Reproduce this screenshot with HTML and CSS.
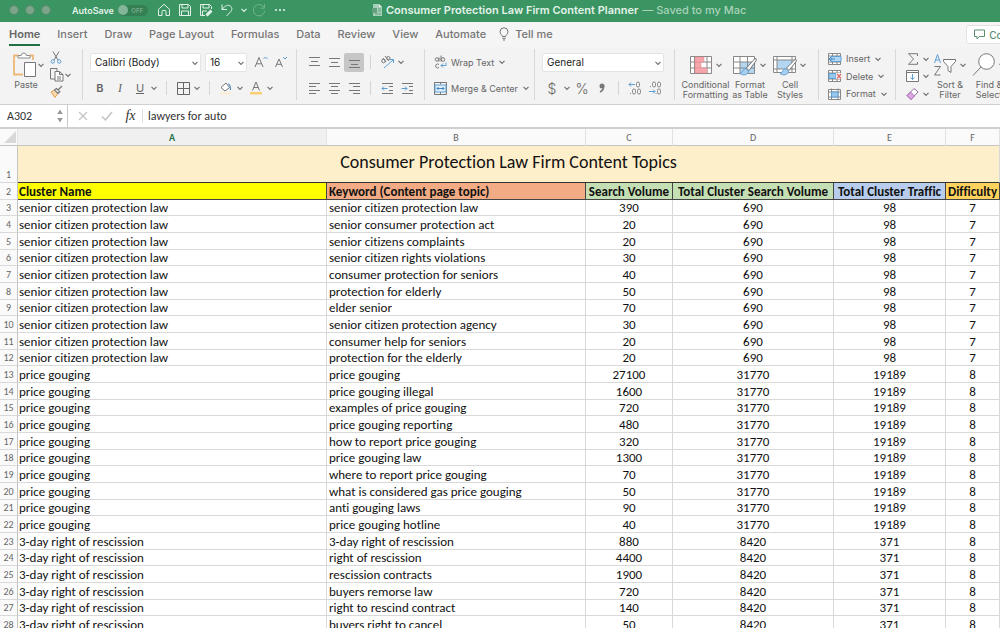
FILE: index.html
```html
<!DOCTYPE html>
<html lang="en">
<head>
<meta charset="utf-8">
<title>Consumer Protection Law Firm Content Planner</title>
<link rel="stylesheet" href="styles.css">
</head>
<body>
<svg class="defs" aria-hidden="true">
  <symbol id="chev" viewBox="0 0 8 8"><path d="M1.5 2.8 4 5.3 6.5 2.8" fill="none" stroke="currentColor" stroke-width="1.2"/></symbol>
</svg>
<div class="app">
  <header class="titlebar">
    <div class="quick">
      <div class="lights"><span></span><span></span><span></span></div>
      <label class="autosave">AutoSave <input type="checkbox" aria-label="AutoSave"><span class="switch">OFF</span></label>
      <button class="q" aria-label="Home"><svg width="14" height="14" viewBox="0 0 14 14"><path d="M1.5 6.3 7 1.3l5.500 5V12.500H9V8.500a1 1 0 0 0-1-1H6a1 1 0 0 0-1 1v4H1.500z"/></svg></button>
      <button class="q" aria-label="Save"><svg width="14" height="14" viewBox="0 0 14 14"><path d="M1.500 1.500h9l2 2v9h-11zM4 1.500V5h6V1.500M3.500 12.500V8h7v4.500"/></svg></button>
      <button class="q" aria-label="Save as"><svg width="14" height="14" viewBox="0 0 14 14"><path d="M6 12.500H1.500v-11h9l2 2V6M4 1.500V5h6V1.500M3.500 12.500V8H8"/><path d="m7 12 5-5M8 13l5-5" stroke-width="1.600"/></svg></button>
      <button class="q" aria-label="Undo"><svg width="14" height="14" viewBox="0 0 14 14"><path d="M2 1.500v5h5M2 6.500C5 2.500 8 1.500 10.300 3c2.200 1.500 2 4 .2 5.800L6.500 13"/></svg></button>
      <svg class="chev" width="8" height="8"><use href="#chev"/></svg>
      <button class="q dim" aria-label="Redo"><svg width="14" height="14" viewBox="0 0 14 14"><path d="M12.500 1.200v4h-4M12.300 5A5.700 5.700 0 1 0 12.700 8"/></svg></button>
      <button class="q" aria-label="More"><svg width="14" height="14" viewBox="0 0 14 14"><g fill="currentColor" stroke="none"><circle cx="3" cy="7" r="1.100"/><circle cx="7" cy="7" r="1.100"/><circle cx="11" cy="7" r="1.100"/></g></svg></button>
    </div>
    <div class="doc">
      <svg width="10" height="12" viewBox="0 0 10 12"><path d="M1 0h6l3 3v9H1z" fill="#a8cfb8"/><path d="M7 0v3h3" fill="#d9ebe0"/><path d="M0 4h5v5H0z" fill="#61a07c"/><path d="M6 5h3M6 7h3M3 10h6" stroke="#61a07c"/></svg>
      <h1>Consumer Protection Law Firm Content Planner</h1><span>— Saved to my Mac</span>
    </div>
  </header>

  <nav class="tabs">
    <button class="active">Home</button><button>Insert</button><button>Draw</button><button>Page Layout</button><button>Formulas</button><button>Data</button><button>Review</button><button>View</button><button>Automate</button>
    <button class="tell"><svg width="10" height="14" viewBox="0 0 10 14"><path d="M3.300 9.500C3.300 7.800 1 7.300 1 4.800a4 4 0 0 1 8 0c0 2.500-2.300 3-2.300 4.700zM3.300 11.300h3.400M4 13h2" fill="none" stroke="currentColor"/></svg>Tell me</button>
    <button class="comments"><svg width="11" height="11" viewBox="0 0 11 11"><path d="M.5 1h10v6.500H5.500L3 10V7.500H.5z" fill="none" stroke="currentColor"/></svg>Comments</button>
  </nav>

  <div class="ribbon">
    <section class="group clip">
      <button class="big paste"><span class="pic"><svg width="24" height="26" viewBox="0 0 24 26"><path d="M5 3.500H1v19h9M17 3.500h3V8" fill="none" stroke="#edb877" stroke-width="1.800"/><path d="M5 6V3.500h3.300a2.500 2.500 0 0 1 5 0H17V6z" fill="#fff" stroke="#8d8d8d"/><path d="M11.500 10.500h11v14h-11z" fill="#fff" stroke="#777"/></svg><svg class="chev" width="8" height="8"><use href="#chev"/></svg></span><span>Paste</span></button>
      <div class="stack">
        <button aria-label="Cut"><svg width="12" height="13" viewBox="0 0 12 13"><path d="m3 .5 5 8.500M9 .5 4 9" fill="none" stroke="#777"/><circle cx="2.800" cy="10.500" r="1.700" fill="none" stroke="#5e9fd4"/><circle cx="9.200" cy="10.500" r="1.700" fill="none" stroke="#5e9fd4"/></svg></button>
        <button aria-label="Copy"><svg width="14" height="14" viewBox="0 0 14 14"><path d="M5 11H.5V.5H7V3" fill="none" stroke="#777"/><path d="M5 3.500h4.500l3.500 3V13H5zM9.500 3.500v3H13M7 9h4M7 11h4" fill="#fff" stroke="#777"/></svg><svg class="chev" width="8" height="8"><use href="#chev"/></svg></button>
        <button aria-label="Format painter"><svg width="13" height="13" viewBox="0 0 13 13"><path d="m1 7 4-2 3 3-3 4.500z" fill="#f8d9b0" stroke="#e59b4a"/><path d="m4.500 5 2-1.500 3.300 3.200L8 8.500zM8 5l4-4" fill="#fff" stroke="#777" stroke-width="1.200"/></svg></button>
      </div>
    </section>

    <section class="group font">
      <div class="line">
        <span class="pick w-font"><select aria-label="Font"><option>Calibri (Body)</option></select><svg class="chev" width="8" height="8"><use href="#chev"/></svg></span>
        <span class="pick w-size"><select aria-label="Font size"><option>16</option></select><svg class="chev" width="8" height="8"><use href="#chev"/></svg></span>
        <button class="t" aria-label="Increase font size"><svg width="14" height="14" viewBox="0 0 14 14"><path d="M1 12 5 2.500 9 12M2.500 8.800h5" fill="none" stroke="#777"/><path d="m9.500 4 2-2 2 2" fill="none" stroke="#5e9fd4"/></svg></button>
        <button class="t" aria-label="Decrease font size"><svg width="14" height="14" viewBox="0 0 14 14"><path d="M1.500 12 5 4l3.500 8M2.800 9.300h4.500" fill="none" stroke="#777"/><path d="m9 2 2 2 2-2" fill="none" stroke="#5e9fd4"/></svg></button>
      </div>
      <div class="line">
        <button class="t b">B</button><button class="t i">I</button><button class="t u">U</button><svg class="chev" width="8" height="8"><use href="#chev"/></svg><i class="rule"></i>
        <button class="t" aria-label="Borders"><svg width="13" height="13" viewBox="0 0 13 13"><path d="M.5.5h12v12H.5zM6.500.5v12M.5 6.500h12" fill="none" stroke="#666"/></svg></button><svg class="chev" width="8" height="8"><use href="#chev"/></svg><i class="rule"></i>
        <button class="t" aria-label="Fill colour"><svg width="14" height="14" viewBox="0 0 14 14"><path d="m2 6.500 5-4.500 3.500 4.500L6 10z" fill="#fff" stroke="#777"/><path d="M9 3c2.500 0 2.500 3 2.500 6" fill="none" stroke="#4a8cc7" stroke-width="1.200"/><path d="M1 11.500h11v2H1z" fill="#fdebd0"/></svg></button><svg class="chev" width="8" height="8"><use href="#chev"/></svg>
        <button class="t" aria-label="Font colour"><svg width="14" height="14" viewBox="0 0 14 14"><path d="m3.500 9.500 3.500-8.500 3.500 8.500M4.800 6.500h4.400" fill="none" stroke="#777"/><path d="M1 11h12v2.500H1z" fill="#f8ce73"/></svg></button><svg class="chev" width="8" height="8"><use href="#chev"/></svg>
      </div>
    </section>

    <section class="group align">
      <div class="line">
        <button class="s" aria-label="Top align"><svg width="13" height="13" viewBox="0 0 13 13"><path d="M1 1.500h11M3 5.500h7M1 9.500h11" stroke="#777"/></svg></button>
        <button class="s" aria-label="Middle align"><svg width="13" height="13" viewBox="0 0 13 13"><path d="M1 2.500h11M3 6.500h7M1 10.500h11" stroke="#777"/></svg></button>
        <button class="s on" aria-label="Bottom align"><svg width="13" height="13" viewBox="0 0 13 13"><path d="M1 4.500h11M3 8.500h7M1 11.500h11" stroke="#777"/></svg></button><i class="rule"></i>
        <button class="s" aria-label="Orientation"><svg width="15" height="14" viewBox="0 0 15 14"><g fill="none" stroke="#777"><circle cx="3.500" cy="6" r="1.800"/><path d="m3 3 3 4M5 1l4 5"/><circle cx="8.300" cy="3.200" r="1.700"/></g><path d="m4 13 9-8M9.500 4.500H13.500V8" fill="none" stroke="#5e9fd4"/></svg></button><svg class="chev" width="8" height="8"><use href="#chev"/></svg>
      </div>
      <div class="line">
        <button class="s" aria-label="Align left"><svg width="13" height="13" viewBox="0 0 13 13"><path d="M1 1.500h11M1 4.500h7M1 8.500h11M1 11.500h7" stroke="#777"/></svg></button>
        <button class="s" aria-label="Centre"><svg width="13" height="13" viewBox="0 0 13 13"><path d="M1 1.500h11M3 4.500h7M1 8.500h11M3 11.500h7" stroke="#777"/></svg></button>
        <button class="s" aria-label="Align right"><svg width="13" height="13" viewBox="0 0 13 13"><path d="M1 1.500h11M5 4.500h7M1 8.500h11M5 11.500h7" stroke="#777"/></svg></button><i class="rule"></i>
        <button class="s" aria-label="Decrease indent"><svg width="13" height="13" viewBox="0 0 13 13"><path d="M1 1.500h11M8 4.500h4M8 8.500h4M1 11.500h11" stroke="#777"/><path d="M1 6.500h5.500M3 4.500l-2 2 2 2" fill="none" stroke="#5e9fd4"/></svg></button>
        <button class="s" aria-label="Increase indent"><svg width="13" height="13" viewBox="0 0 13 13"><path d="M1 1.500h11M8 4.500h4M8 8.500h4M1 11.500h11" stroke="#777"/><path d="M.5 6.500H6M4 4.500l2 2-2 2" fill="none" stroke="#5e9fd4"/></svg></button>
      </div>
    </section>

    <section class="group wrap">
      <div class="line"><button class="label"><svg width="13" height="14" viewBox="0 0 13 14"><g fill="none" stroke="#777"><circle cx="3" cy="4.500" r="1.700"/><path d="M5 2.500v4M7 .5v6"/><circle cx="9" cy="4.500" r="1.800"/><path d="M5 9.500a2 2 0 1 0 0 3"/></g><path d="M12 7.500v3H7M9 8.500l-2 2 2 2" fill="none" stroke="#5e9fd4"/></svg>Wrap Text<svg class="chev" width="8" height="8"><use href="#chev"/></svg></button></div>
      <div class="line"><button class="label"><svg width="13" height="13" viewBox="0 0 13 13"><path d="M.5.5h12v12H.5zM6.500.5v2M6.500 10v2.500" fill="none" stroke="#777"/><path d="M1 3h11v7H1z" fill="#e1f0fb" stroke="#5e9fd4"/><path d="M3 6.500h7M4.500 5 3 6.500 4.500 8M8.500 5 10 6.500 8.500 8" fill="none" stroke="#3f86c2"/></svg>Merge &amp; Center<svg class="chev" width="8" height="8"><use href="#chev"/></svg></button></div>
    </section>

    <section class="group number">
      <div class="line"><span class="pick w-num"><select aria-label="Number format"><option>General</option></select><svg class="chev" width="8" height="8"><use href="#chev"/></svg></span></div>
      <div class="line">
        <button class="s sym">$</button><svg class="chev" width="8" height="8"><use href="#chev"/></svg><button class="s sym">%</button><button class="s comma" aria-label="Comma style"><svg width="8" height="12" viewBox="0 0 8 12"><circle cx="4" cy="4" r="2.500" fill="#777"/><path d="M5.500 4q.5 4-3.500 6" fill="none" stroke="#777" stroke-width="1.500"/></svg></button><i class="rule"></i>
        <button class="s dec" aria-label="Increase decimal"><svg width="14" height="14" viewBox="0 0 14 14"><g fill="none" stroke="#888"><rect x="8.500" y="1" width="3" height="5" rx="1.500"/><rect x="4.500" y="8" width="3" height="5" rx="1.500"/><rect x="9.500" y="8" width="3" height="5" rx="1.500"/><path d="M2 12.500h1"/></g><path d="M7 3.500H1M3 1.500l-2 2 2 2" fill="none" stroke="#5e9fd4"/></svg></button>
        <button class="s dec" aria-label="Decrease decimal"><svg width="14" height="14" viewBox="0 0 14 14"><g fill="none" stroke="#888"><rect x="4.500" y="1" width="3" height="5" rx="1.500"/><rect x="9.500" y="1" width="3" height="5" rx="1.500"/><rect x="9.500" y="8" width="3" height="5" rx="1.500"/><path d="M2 5.500h1M7.500 12.500h1"/></g><path d="M1 10.500h6M5 8.500l2 2-2 2" fill="none" stroke="#5e9fd4"/></svg></button>
      </div>
    </section>

    <section class="group styles">
      <button class="big cond"><span class="pic"><svg width="24" height="24" viewBox="0 0 24 24"><path d="M1.500 3.500h21v17h-21zM1.500 9h21M1.500 15h21M5.500 3.500v17M18 3.500v17" fill="#fff" stroke="#888"/><path d="M6 4h9v5H6zM6 9h6v6H6zM6 15h12v5H6z" fill="#f5a6ab" stroke="#e08a90" stroke-width=".5"/></svg><svg class="chev" width="8" height="8"><use href="#chev"/></svg></span><span>Conditional<br>Formatting</span></button>
      <button class="big"><span class="pic"><svg width="24" height="24" viewBox="0 0 24 24"><path d="M.5 3.500h21v17H.5z" fill="#fff"/><path d="M7 9h14v11H7z" fill="#b3d6f2"/><path d="M.5 3.500h21v17H.5zM.5 9h21M.5 15h21M7 3.500v17M14.500 3.500v17" fill="none" stroke="#888"/><path d="m22.500 5-9 10 2.500 2.500L23.500 7z" fill="#fff" stroke="#777"/><path d="M13 15.500c-3 0-2.500 3.500-6 5 3 2.500 8.500 1.500 8.500-2.500z" fill="#a8cff0" stroke="#5e9fd4"/></svg><svg class="chev" width="8" height="8"><use href="#chev"/></svg></span><span>Format<br>as Table</span></button>
      <button class="big"><span class="pic"><svg width="24" height="24" viewBox="0 0 24 24"><path d="M.5 3.500h22v16H.5z" fill="#fff"/><path d="M4 7h15v9H4z" fill="#b3d6f2"/><path d="M.5 3.500h22v16H.5zM.5 7h22M.5 16h22M4 3.500v16M19 3.500v16" fill="none" stroke="#888"/><path d="m22.500 6-9 9 2.500 2.500L23.500 8z" fill="#fff" stroke="#777"/><path d="M13 15.500c-3 0-2.500 3.500-6 5 3 2.500 8.500 1.500 8.500-2.500z" fill="#a8cff0" stroke="#5e9fd4"/></svg><svg class="chev" width="8" height="8"><use href="#chev"/></svg></span><span>Cell<br>Styles</span></button>
    </section>

    <section class="group cells">
      <button class="label"><svg width="14" height="12" viewBox="0 0 14 12"><path d="M.5.5h12v11H.5zM.5 3h12M.5 9h12M4.500.5v11M9 .5v11" fill="#fff" stroke="#888"/><path d="M3 3.500h10v5H3z" fill="#b3d6f2" stroke="#5e9fd4"/><path d="M7 6H1M3 4 1 6l2 2" fill="none" stroke="#3f86c2"/></svg>Insert<svg class="chev" width="8" height="8"><use href="#chev"/></svg></button>
      <button class="label"><svg width="14" height="12" viewBox="0 0 14 12"><path d="M.5.5h12v11H.5zM.5 3h12M.5 9h12M4.500.5v11M9 .5v11" fill="#fff" stroke="#888"/><path d="M1 3.500h7v5H1z" fill="#9ac8ed" stroke="#5e9fd4"/><path d="M8 3h6v6H8z" fill="#f3f3f3"/><path d="m9 4 4 4.500M13 4 9 8.500" stroke="#e06666" stroke-width="1.200"/></svg>Delete<svg class="chev" width="8" height="8"><use href="#chev"/></svg></button>
      <button class="label"><svg width="14" height="12" viewBox="0 0 14 12"><path d="M.5 1.500h12v10H.5zM.5 4h12M.5 9h12M3.500.5v11M10 .5v11" fill="#fff" stroke="#888"/><path d="M3.500 4H10v5H3.500z" fill="#9ac8ed" stroke="#5e9fd4"/></svg>Format<svg class="chev" width="8" height="8"><use href="#chev"/></svg></button>
    </section>

    <section class="group edit">
      <div class="stack even">
        <button aria-label="AutoSum"><svg width="14" height="12" viewBox="0 0 14 12"><path d="M11.500 3V.7H2.500L7.500 6l-5 5.300h9V9" fill="none" stroke="#777"/></svg><svg class="chev" width="8" height="8"><use href="#chev"/></svg></button>
        <button aria-label="Fill"><svg width="14" height="12" viewBox="0 0 14 12"><path d="M.5.5h12v11H.5zM.5 2.500h12" fill="#fff" stroke="#777"/><path d="M6.500 4v5.500M4.500 7.500l2 2 2-2" fill="none" stroke="#5e9fd4"/></svg><svg class="chev" width="8" height="8"><use href="#chev"/></svg></button>
        <button aria-label="Clear"><svg width="14" height="12" viewBox="0 0 14 12"><path d="M1 7.500 8 .5l4 3.500-7 7.500z" fill="#fff" stroke="#8c6a94"/><path d="m1 7.500 3.500-3.500 4 4L5 11.500z" fill="#d9a6e0" stroke="#b46fc0"/></svg><svg class="chev" width="8" height="8"><use href="#chev"/></svg></button>
      </div>
      <button class="big"><span class="pic"><svg width="24" height="24" viewBox="0 0 24 24"><path d="M1.500 10 4.500 1.500l3 8.500M2.500 7h4" fill="none" stroke="#5e9fd4"/><path d="M1.500 13.500h6l-6 8.500h6" fill="none" stroke="#777"/><path d="M10.500 6.500h12v2l-4.500 5v6l-3-2v-4l-4.500-5z" fill="#fff" stroke="#777"/></svg><svg class="chev" width="8" height="8"><use href="#chev"/></svg></span><span>Sort &amp;<br>Filter</span></button>
      <button class="big find"><span class="pic"><svg width="24" height="24" viewBox="0 0 24 24"><circle cx="14.500" cy="8.500" r="7.800" fill="#fff" stroke="#777"/><path d="M9 14 1 22.500" stroke="#777"/></svg><svg class="chev" width="8" height="8"><use href="#chev"/></svg></span><span>Find &amp;<br>Select</span></button>
    </section>
  </div>

  <div class="formula">
    <div class="name"><input aria-label="Name box" value="A302"><svg width="8" height="14" viewBox="0 0 8 14"><path d="m4 .5 2.800 4.500H1.200zM4 13.500 6.800 9H1.200z" fill="#999"/></svg></div>
    <button aria-label="Cancel"><svg width="10" height="10" viewBox="0 0 10 10"><path d="m1 1 8 8M9 1 1 9" stroke="#c4c4c4" stroke-width="1.200"/></svg></button>
    <button aria-label="Enter"><svg width="12" height="10" viewBox="0 0 12 10"><path d="m1 5.500 3.500 3.500 6.500-8" fill="none" stroke="#c4c4c4" stroke-width="1.500"/></svg></button>
    <button class="fx">fx</button>
    <input class="value" aria-label="Formula" value="lawyers for auto">
  </div>

  <main class="sheet">
    <table>
      <colgroup><col class="c-n"><col class="c-a"><col class="c-b"><col class="c-c"><col class="c-d"><col class="c-e"><col></colgroup>
      <thead><tr><th class="corner"><svg width="12" height="12" viewBox="0 0 12 12"><path d="M12 0v12H0z" fill="#d8d8d8"/></svg></th><th class="sel">A</th><th>B</th><th>C</th><th>D</th><th>E</th><th>F</th></tr></thead>
      <tbody class="top">
        <tr class="banner"><th>1</th><td colspan="6">Consumer Protection Law Firm Content Topics</td></tr>
        <tr class="heads"><th>2</th><td class="yellow">Cluster Name</td><td class="orange">Keyword (Content page topic)</td><td class="green">Search Volume</td><td class="green">Total Cluster Search Volume</td><td class="blue">Total Cluster Traffic</td><td class="gold">Difficulty</td></tr>
      </tbody>
      <tbody class="data">
        <tr><th>3</th><td>senior citizen protection law</td><td>senior citizen protection law</td><td>390</td><td>690</td><td>98</td><td>7</td></tr>
        <tr><th>4</th><td>senior citizen protection law</td><td>senior consumer protection act</td><td>20</td><td>690</td><td>98</td><td>7</td></tr>
        <tr><th>5</th><td>senior citizen protection law</td><td>senior citizens complaints</td><td>20</td><td>690</td><td>98</td><td>7</td></tr>
        <tr><th>6</th><td>senior citizen protection law</td><td>senior citizen rights violations</td><td>30</td><td>690</td><td>98</td><td>7</td></tr>
        <tr><th>7</th><td>senior citizen protection law</td><td>consumer protection for seniors</td><td>40</td><td>690</td><td>98</td><td>7</td></tr>
        <tr><th>8</th><td>senior citizen protection law</td><td>protection for elderly</td><td>50</td><td>690</td><td>98</td><td>7</td></tr>
        <tr><th>9</th><td>senior citizen protection law</td><td>elder senior</td><td>70</td><td>690</td><td>98</td><td>7</td></tr>
        <tr><th>10</th><td>senior citizen protection law</td><td>senior citizen protection agency</td><td>30</td><td>690</td><td>98</td><td>7</td></tr>
        <tr><th>11</th><td>senior citizen protection law</td><td>consumer help for seniors</td><td>20</td><td>690</td><td>98</td><td>7</td></tr>
        <tr><th>12</th><td>senior citizen protection law</td><td>protection for the elderly</td><td>20</td><td>690</td><td>98</td><td>7</td></tr>
        <tr><th>13</th><td>price gouging</td><td>price gouging</td><td>27100</td><td>31770</td><td>19189</td><td>8</td></tr>
        <tr><th>14</th><td>price gouging</td><td>price gouging illegal</td><td>1600</td><td>31770</td><td>19189</td><td>8</td></tr>
        <tr><th>15</th><td>price gouging</td><td>examples of price gouging</td><td>720</td><td>31770</td><td>19189</td><td>8</td></tr>
        <tr><th>16</th><td>price gouging</td><td>price gouging reporting</td><td>480</td><td>31770</td><td>19189</td><td>8</td></tr>
        <tr><th>17</th><td>price gouging</td><td>how to report price gouging</td><td>320</td><td>31770</td><td>19189</td><td>8</td></tr>
        <tr><th>18</th><td>price gouging</td><td>price gouging law</td><td>1300</td><td>31770</td><td>19189</td><td>8</td></tr>
        <tr><th>19</th><td>price gouging</td><td>where to report price gouging</td><td>70</td><td>31770</td><td>19189</td><td>8</td></tr>
        <tr><th>20</th><td>price gouging</td><td>what is considered gas price gouging</td><td>50</td><td>31770</td><td>19189</td><td>8</td></tr>
        <tr><th>21</th><td>price gouging</td><td>anti gouging laws</td><td>90</td><td>31770</td><td>19189</td><td>8</td></tr>
        <tr><th>22</th><td>price gouging</td><td>price gouging hotline</td><td>40</td><td>31770</td><td>19189</td><td>8</td></tr>
        <tr><th>23</th><td>3-day right of rescission</td><td>3-day right of rescission</td><td>880</td><td>8420</td><td>371</td><td>8</td></tr>
        <tr><th>24</th><td>3-day right of rescission</td><td>right of rescission</td><td>4400</td><td>8420</td><td>371</td><td>8</td></tr>
        <tr><th>25</th><td>3-day right of rescission</td><td>rescission contracts</td><td>1900</td><td>8420</td><td>371</td><td>8</td></tr>
        <tr><th>26</th><td>3-day right of rescission</td><td>buyers remorse law</td><td>720</td><td>8420</td><td>371</td><td>8</td></tr>
        <tr><th>27</th><td>3-day right of rescission</td><td>right to rescind contract</td><td>140</td><td>8420</td><td>371</td><td>8</td></tr>
        <tr><th>28</th><td>3-day right of rescission</td><td>buyers right to cancel</td><td>50</td><td>8420</td><td>371</td><td>8</td></tr>
      </tbody>
    </table>
  </main>
</div>
</body>
</html>
```
FILE: styles.css
```css
* { box-sizing: border-box; }
body { margin: 0; background: #fff; font-family: Inter, "Liberation Sans", sans-serif; color: #666; }
button, input, select { font: inherit; color: inherit; border: 0; padding: 0; margin: 0; background: none; }
button { display: flex; align-items: center; justify-content: center; white-space: nowrap; }
svg { flex: none; display: block; }
.defs { position: absolute; width: 0; height: 0; }
.app { height: 100vh; display: flex; flex-direction: column; overflow: hidden; }

/* Title bar */
.titlebar { flex: none; height: 22px; display: flex; align-items: center; background: #3a9562; color: #e3f2e9; padding-bottom: 2px; }
.quick { flex: none; width: 372px; display: flex; align-items: center; padding-left: 9px; }
.lights { display: flex; gap: 6px; margin-right: 21px; }
.lights span { width: 10px; height: 10px; border-radius: 50%; background: #7aa58b; border: 1px solid #54896a; }
.autosave { display: flex; align-items: center; font-size: 9px; font-weight: 600; margin-right: 6px; }
.autosave input { appearance: none; width: 0; height: 0; }
.switch { width: 30px; height: 11px; margin-left: 4px; padding-right: 5px; border-radius: 6px; background: #348054; color: #79ae8e; font-size: 6px; line-height: 11px; display: flex; justify-content: space-between; }
.switch::before { content: ""; width: 10px; height: 10px; border-radius: 50%; background: #83b698; }
.q { width: 21px; }
.q svg { fill: none; stroke: currentColor; }
.quick .chev { margin: 0 1px 0 2px; }
.dim { color: #71b48d; }
.doc { display: flex; align-items: center; gap: 4px; font-size: 11px; white-space: nowrap; }
.doc h1 { margin: 0; font-size: 11px; font-weight: 600; }
.doc span { color: #a9d2b9; font-weight: 500; }

/* Tabs */
.tabs { flex: none; height: 25px; display: flex; align-items: center; gap: 17px; padding-left: 9px; background: #f5f5f5; font-size: 11px; overflow: hidden; }
.tabs button { flex: none; height: 22px; font-weight: 500; color: #757575; border-bottom: 2px solid transparent; }
.tabs .active { font-weight: 600; color: #666; border-bottom-color: #1f7145; }
.tabs .tell { gap: 6px; margin-left: -4px; }
.tabs .comments { margin-left: auto; margin-right: -49px; height: 19px; gap: 4px; padding: 0 7px; background: #fff; border: 1px solid #e2e2e2; border-radius: 3px; color: #5b8f72; font-size: 10px; }

/* Ribbon */
.ribbon { flex: none; height: 58px; display: flex; align-items: flex-start; background: #f3f3f3; border-bottom: 1px solid #d0d0d0; font-size: 9px; overflow: hidden; padding-top: 2px; }
.group { flex: none; height: 51px; border-right: 1px solid #d8d8d8; }
.chev { color: #707070; }
.quick .chev { color: #e3f2e9; }
.line { display: flex; align-items: center; height: 26px; }
.rule { width: 1px; height: 14px; background: #d4d4d4; }
.stack { display: flex; flex-direction: column; justify-content: space-between; align-items: flex-start; padding: 1px 0; }
.stack button { height: 15px; }
.big { flex-direction: column; justify-content: flex-start; width: 40px; line-height: 10px; }
.big .pic { display: flex; align-items: center; gap: 2px; height: 31px; }
.big > span:last-child { width: 48px; text-align: center; }
.label { gap: 5px; font-size: 9px; }

.clip { width: 83px; display: flex; padding-left: 6px; }
.paste .pic { gap: 0; padding-left: 6px; }
.paste { margin-right: 4px; }

.font { width: 214px; padding-left: 7px; }
.pick { position: relative; display: flex; height: 19px; background: #fff; border: 1px solid #e4e4e4; border-radius: 2px; margin-right: 4px; }
.pick select { appearance: none; width: 100%; padding-left: 4px; color: #222; font-size: 10px; outline: 0; }
.pick .chev { position: absolute; right: 1px; top: 5px; }
.w-font { width: 111px; }
.w-size { width: 42px; }
.w-num { width: 122px; }
.t { width: 20px; font-size: 11px; }
.font .chev + .rule { margin: 0 6px 0 8px; }
.font .chev + .t { margin-left: 2px; }
.b { font-weight: 600; }
.i { font-family: "Liberation Serif", serif; font-style: italic; font-size: 12px; }
.u { text-decoration: underline; }

.align { width: 128px; padding-left: 7px; }
.s { width: 20px; height: 19px; }
.on { background: #c6c6c6; border-radius: 2px; }
.align .rule { margin: 0 6px; }

.wrap { width: 110px; padding-left: 9px; }
.wrap .label { gap: 4px; }

.number { width: 140px; padding-left: 7px; }
.sym { font-size: 14px; font-weight: 300; }
.number .s + .chev { margin: 0 1px 0 1px; }
.number .rule { margin: 0 6px; }

.styles { width: 144px; display: flex; padding-left: 6px; }
.cond { width: 49px; }

.cells { width: 77px; display: flex; flex-direction: column; align-items: flex-start; justify-content: space-between; padding: 3px 0 0 9px; }
.cells .label { height: 13px; gap: 4px; }

.edit { display: flex; padding-left: 10px; border: 0; }
.even { padding: 3px 0 0; }
.even button { gap: 2px; height: 13px; }
.find { width: 38px; }

/* Formula bar */
.formula, .sheet { font-family: Carlito, Lato, "Liberation Sans", sans-serif; font-variant-ligatures: none; }
.formula { flex: none; height: 24px; display: flex; align-items: center; background: #fff; border-bottom: 2px solid #d0d0d0; font-size: 12px; color: #333; }
.name { width: 68px; height: 100%; display: flex; align-items: center; justify-content: space-between; padding: 0 3px 0 7px; border-right: 1px solid #c9c9c9; }
.name input { width: 44px; }
.formula button { width: 24px; }
.formula > button:nth-child(2) { margin-left: 3px; }
.formula .fx { font-family: "Liberation Serif", serif; font-style: italic; font-size: 14px; border-right: 1px solid #e0e0e0; line-height: 14px; }
.value { flex: 1; padding-left: 5px; outline: 0; }

/* Sheet */
.sheet { flex: 1; min-height: 0; overflow: hidden; color: #111; }
table { width: 100%; table-layout: fixed; border-collapse: separate; border-spacing: 0; font-size: 13px; }
.c-n { width: 18px; }
.c-a { width: 309px; }
.c-b { width: 259px; }
.c-c { width: 87px; }
.c-d { width: 161px; }
.c-e { width: 112px; }
th, td { height: 17px; padding: 0 1px; line-height: 15px; white-space: nowrap; border-right: 1px solid #d9d9d9; border-bottom: 1px solid #d9d9d9; text-align: center; overflow: hidden; }
th { font-size: 10px; font-weight: 400; color: #666; background: #fafafa; border-right-color: #c4c4c4; }
thead th { height: 17px; border-right-color: #e2e2e2; border-bottom-color: #c4c4c4; }
thead .sel { background: #f0f0f0; color: #1f7145; font-weight: 700; }
.corner svg { margin-left: 3px; }
td:nth-child(2), td:nth-child(3) { text-align: left; }
td:nth-child(3) { padding-left: 2px; }
.banner td, .banner th { height: 37px; }
.banner td:nth-child(2) { background: #feefcb; border-bottom-color: #333; font-size: 18px; text-align: center; line-height: 20px; padding-bottom: 4px; }
.banner th { vertical-align: bottom; }
.heads td { font-weight: 700; border-color: #444; }
.yellow { background: #ff0; }
.orange { background: #f2ab84; }
.green { background: #c5dfb5; }
.blue { background: #b8cdee; }
.gold { background: #ffd25e; }
.data tr:nth-child(3n+1) > * { height: 16px; line-height: 14px; }
```
